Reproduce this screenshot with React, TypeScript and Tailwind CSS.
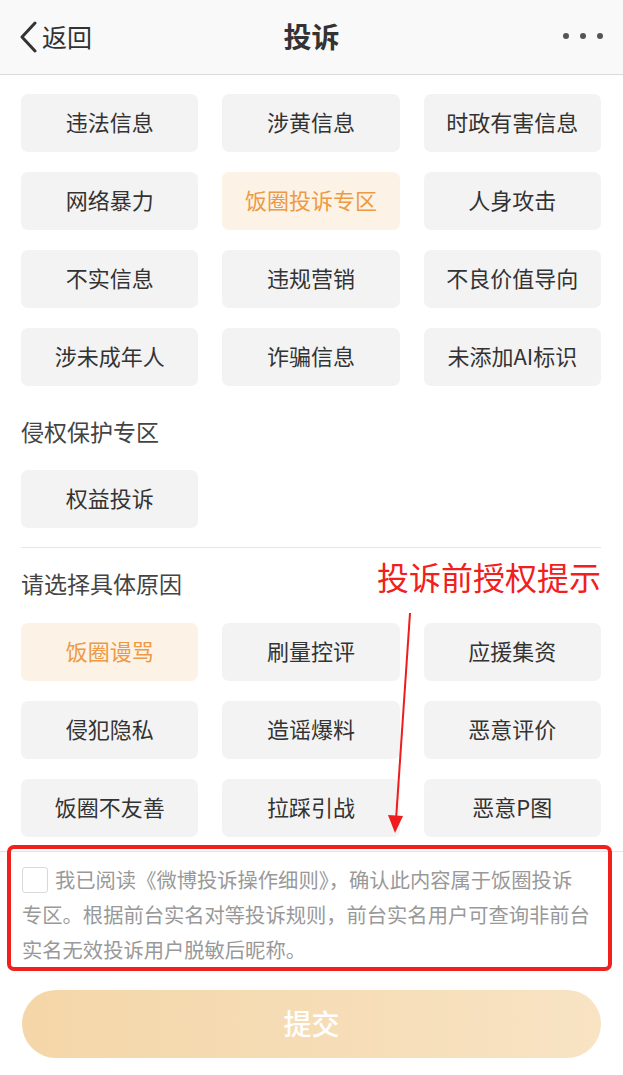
import React from 'react';

const font = { fontFamily: '"Noto Sans CJK SC", "Noto Sans", sans-serif' };

const topReasons = [
  '违法信息', '涉黄信息', '时政有害信息',
  '网络暴力', '饭圈投诉专区', '人身攻击',
  '不实信息', '违规营销', '不良价值导向',
  '涉未成年人', '诈骗信息', '未添加AI标识',
];

const detailReasons = [
  '饭圈谩骂', '刷量控评', '应援集资',
  '侵犯隐私', '造谣爆料', '恶意评价',
  '饭圈不友善', '拉踩引战', '恶意P图',
];

const Chip: React.FC<{ label: string; active?: boolean }> = ({ label, active }) => (
  <div
    className={
      active
        ? 'h-[58px] pb-[4px] rounded-[7px] bg-[#fdf2e6] text-[#ec9a45] text-[22px] flex items-center justify-center'
        : 'h-[58px] pb-[4px] rounded-[7px] bg-[#f3f3f3] text-[#333333] text-[22px] flex items-center justify-center'
    }
  >
    {label}
  </div>
);

export default function App() {
  return (
    <div className="relative w-[623px] h-[1075px] bg-white overflow-hidden" style={font}>
      {/* header */}
      <div className="h-[75px] bg-[#f9f9f9] border-b border-[#dadada] flex items-center px-[18px] pb-[2px]">
        <div className="flex items-center w-[150px]">
          <svg width="20" height="32" viewBox="0 0 20 32" className="mt-[1px]">
            <path d="M17 2 L4 16 L17 30" fill="none" stroke="#333" strokeWidth="3" strokeLinecap="round" strokeLinejoin="round" />
          </svg>
          <span className="ml-[4px] text-[25px] text-[#333] leading-none">返回</span>
        </div>
        <div className="flex-1 text-center text-[28px] font-bold text-[#333] leading-none">投诉</div>
        <div className="w-[150px] flex justify-end items-center gap-[11px] pr-[2px]">
          <span className="w-[6px] h-[6px] rounded-full bg-[#555]" />
          <span className="w-[6px] h-[6px] rounded-full bg-[#555]" />
          <span className="w-[6px] h-[6px] rounded-full bg-[#555]" />
        </div>
      </div>

      {/* reasons */}
      <div className="pl-[21px] pr-[22px] pt-[19px]">
        <div className="grid grid-cols-3 gap-x-[24px] gap-y-[20px]">
          {topReasons.map((r) => (
            <Chip key={r} label={r} active={r === '饭圈投诉专区'} />
          ))}
        </div>

        <div className="mt-[27px] h-[38px] pb-[2px] flex items-center text-[23px] text-[#444]">侵权保护专区</div>
        <div className="mt-[19px] grid grid-cols-3 gap-x-[24px]">
          <Chip label="权益投诉" />
        </div>

        <div className="mt-[19px] border-t border-[#e6e6e6]" />

        <div className="mt-[18px] h-[38px] pb-[3px] flex items-center text-[23px] text-[#444]">请选择具体原因</div>
        <div className="mt-[19px] grid grid-cols-3 gap-x-[24px] gap-y-[20px]">
          {detailReasons.map((r) => (
            <Chip key={r} label={r} active={r === '饭圈谩骂'} />
          ))}
        </div>
      </div>

      {/* agreement */}
      <div className="mt-[14px] border-t border-[#e4e4e4] pl-[22px] pt-[10px]">
        <div className="text-[20.3px] leading-[35px] text-[#999999] whitespace-nowrap">
          <span className="inline-block align-middle w-[26px] h-[26px] border border-[#d8d8d8] rounded-[3px] mr-[7px] -mt-[4px]" />
          我已阅读《微博投诉操作细则》，确认此内容属于饭圈投诉
          <br />
          专区。根据前台实名对等投诉规则，前台实名用户可查询非前台
          <br />
          实名无效投诉用户脱敏后昵称。
        </div>
      </div>

      <div className="mt-[23px] px-[22px]">
        <div className="h-[68px] pb-[3px] rounded-full bg-gradient-to-r from-[#f4d6a8] to-[#f8e3c3] flex items-center justify-center text-white text-[28px] font-medium">
          提交
        </div>
      </div>

      {/* annotation overlay */}
      <div className="absolute left-[7px] top-[845px] w-[605px] h-[126px] border-[4px] border-[#f2201c] rounded-[7px] pointer-events-none" />
      <div className="absolute left-[377px] top-[554px] text-[32px] leading-[44px] text-[#f0201c]">投诉前授权提示</div>
      <svg className="absolute left-0 top-0 pointer-events-none" width="623" height="1075">
        <line x1="410" y1="613" x2="396" y2="820" stroke="#ee1c1c" strokeWidth="2" />
        <polygon points="388,815 403,816 395,833" fill="#ee1c1c" />
      </svg>
    </div>
  );
}
